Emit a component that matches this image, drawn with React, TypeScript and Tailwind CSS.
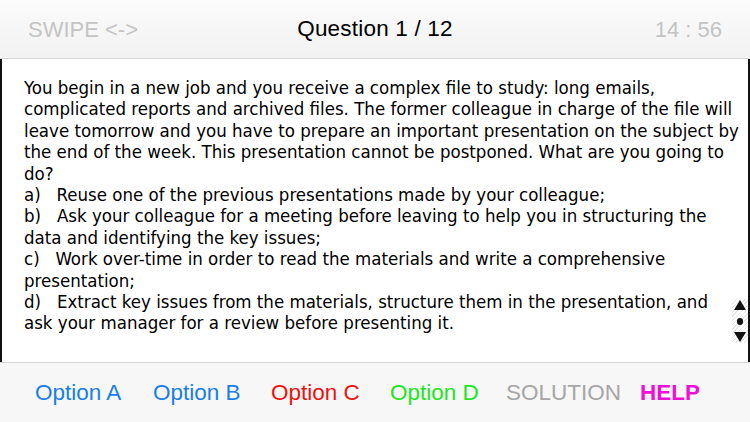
export default function App() {
  const lines = [
    "You begin in a new job and you receive a complex file to study: long emails,",
    "complicated reports and archived files. The former colleague in charge of the file will",
    "leave tomorrow and you have to prepare an important presentation on the subject by",
    "the end of the week. This presentation cannot be postponed. What are you going to",
    "do?",
    "a)\u00a0\u00a0\u00a0Reuse one of the previous presentations made by your colleague;",
    "b)\u00a0\u00a0\u00a0Ask your colleague for a meeting before leaving to help you in structuring the",
    "data and identifying the key issues;",
    "c)\u00a0\u00a0\u00a0Work over-time in order to read the materials and write a comprehensive",
    "presentation;",
    "d)\u00a0\u00a0\u00a0Extract key issues from the materials, structure them in the presentation, and",
    "ask your manager for a review before presenting it.",
  ];
  return (
    <div className="w-[750px] h-[422px] flex flex-col bg-white overflow-hidden">
      <div className="h-[59px] flex items-center justify-between px-[28px] bg-gradient-to-b from-[#fbfbfb] to-[#f2f2f2] border-b border-[#d6d6d6] font-['Liberation_Sans',sans-serif] text-[22px]">
        <span className="text-[#c4c4c4] w-[140px]">SWIPE &lt;-&gt;</span>
        <span className="text-black text-[22.5px] tracking-[0.2px]">Question 1 / 12</span>
        <span className="text-[#c4c4c4] w-[140px] text-right">14 : 56</span>
      </div>
      <div className="relative flex-1 border-x-2 border-[#111] pl-[22px] pt-[18px] font-['DejaVu_Sans_Condensed','DejaVu_Sans',sans-serif] text-[18.5px] leading-[21.4px] text-black">
        {lines.map((l, i) => (
          <p key={i} className="whitespace-nowrap">{l}</p>
        ))}
        <div className="absolute right-0 top-[240px] w-[16px] h-[44px] flex flex-col items-center justify-between bg-[repeating-linear-gradient(135deg,#e6e6e6_0px,#e6e6e6_1px,#ffffff_1px,#ffffff_3px)]">
          <svg width="14" height="12" viewBox="0 0 14 12"><path d="M7 1 L13 11 L1 11 Z" fill="#111" /></svg>
          <div className="w-[6px] h-[7px] rounded-full bg-[#111]" />
          <svg width="14" height="12" viewBox="0 0 14 12"><path d="M1 1 L13 1 L7 11 Z" fill="#111" /></svg>
        </div>
      </div>
      <div className="h-[60px] flex items-center pl-[35px] bg-[#f7f7f7] border-t border-[#d4d4d4] font-['Liberation_Sans',sans-serif] text-[22.5px]">
        <span className="text-[#1a7ee8] w-[118px]">Option A</span>
        <span className="text-[#1a7ee8] w-[118px]">Option B</span>
        <span className="text-[#f01010] w-[119px]">Option C</span>
        <span className="text-[#1ee61e] w-[116px]">Option D</span>
        <span className="text-[#a6a6a6] w-[134px]">SOLUTION</span>
        <span className="text-[#ee10d8] font-bold">HELP</span>
      </div>
    </div>
  );
}
